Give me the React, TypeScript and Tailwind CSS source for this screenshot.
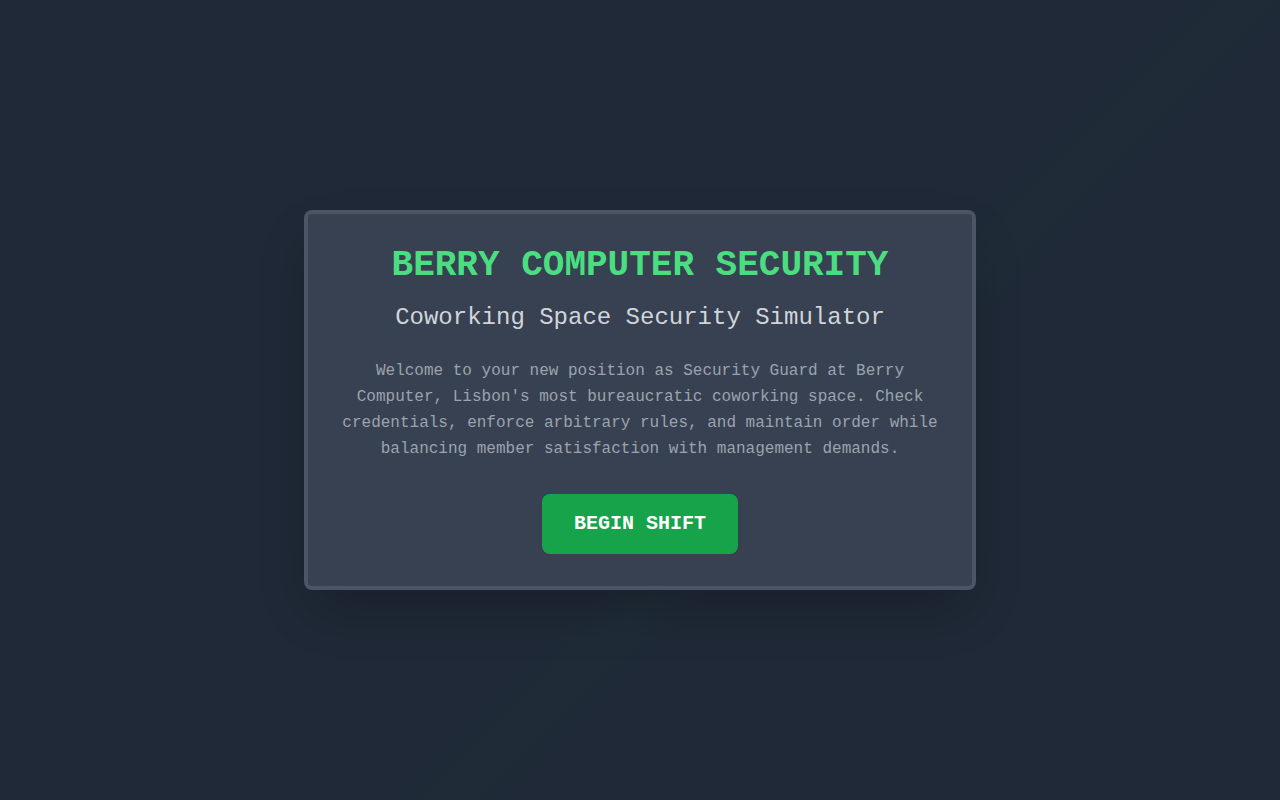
export default function App() {
  return (
    <main className="relative flex min-h-screen items-center justify-center overflow-hidden bg-[#1f2937] px-4 font-['Liberation_Mono','Courier_New',monospace]">
      {/* faint diagonal sheen behind the card */}
      <div className="pointer-events-none absolute inset-0 bg-[linear-gradient(135deg,transparent_57%,rgba(34,197,94,0.018)_60%,transparent_63%)]" />

      <div className="relative w-full max-w-2xl rounded-lg border-4 border-[#4b5563] bg-[#374151] p-8 text-center shadow-2xl">
        <h1 className="mb-4 text-4xl font-bold text-[#4ade80]">
          BERRY COMPUTER SECURITY
        </h1>

        <h2 className="mb-6 text-2xl text-[#d1d5db]">
          Coworking Space Security Simulator
        </h2>

        <p className="mb-8 text-base leading-relaxed text-[#9ca3af]">
          Welcome to your new position as Security Guard at Berry Computer,
          Lisbon's most bureaucratic coworking space. Check credentials, enforce
          arbitrary rules, and maintain order while balancing member
          satisfaction with management demands.
        </p>

        <button className="rounded-lg bg-[#16a34a] px-8 py-4 text-xl font-bold text-white">
          BEGIN SHIFT
        </button>
      </div>
    </main>
  );
}
